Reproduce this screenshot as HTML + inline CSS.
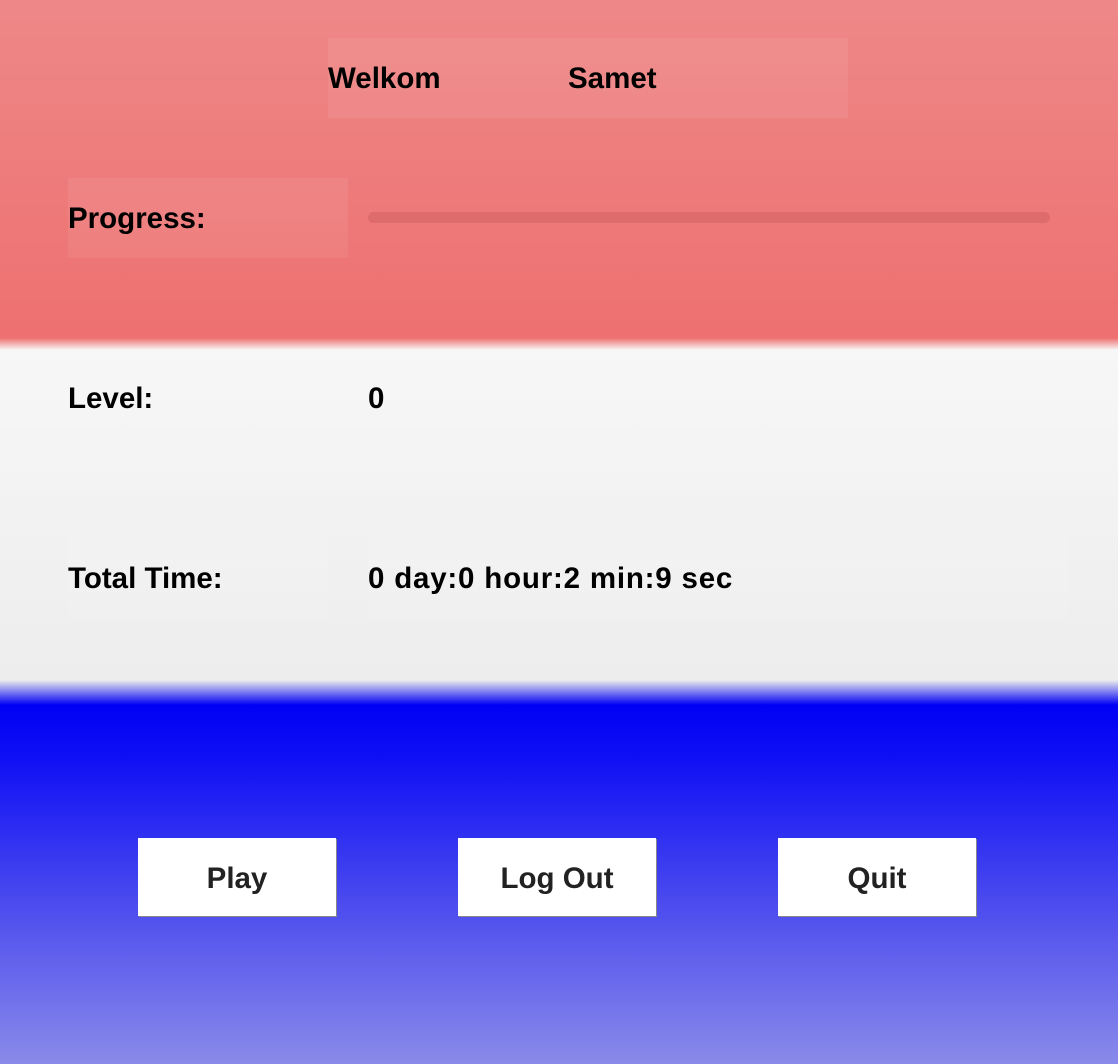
<!DOCTYPE html>
<html><head><meta charset="utf-8"><style>
html,body{margin:0;padding:0;}
body{width:1118px;height:1064px;position:relative;overflow:hidden;font-family:"Liberation Sans",sans-serif;font-weight:bold;
background:linear-gradient(to bottom,#ee8888 0px,#ee7070 338px,#f7f7f7 350px,#ededed 680px,#0000f5 705px,#1010f5 760px,#4a4aef 900px,#8a8aea 1064px);}
.box{position:absolute;height:80px;line-height:82px;font-size:29.5px;color:#000;box-sizing:border-box;white-space:nowrap;}
.hl{background:rgba(255,255,255,0.07);}
.bar{position:absolute;left:368px;top:212px;width:682px;height:11px;border-radius:6px;background:rgba(160,60,60,0.2);}
.btn{position:absolute;top:838px;width:198px;height:78px;background:#fff;box-shadow:1px 1px 0 #888;text-align:center;line-height:82px;font-size:29.5px;color:#222;}
</style></head><body>
<div class="box hl" style="left:328px;top:38px;width:240px;">Welkom</div>
<div class="box hl" style="left:568px;top:38px;width:280px;">Samet</div>
<div class="box hl" style="left:68px;top:178px;width:280px;">Progress:</div>
<div class="bar"></div>
<div class="box" style="left:68px;top:358px;width:280px;">Level:</div>
<div class="box" style="left:368px;top:358px;width:280px;">0</div>
<div class="box hl" style="left:68px;top:538px;width:260px;">Total Time:</div>
<div class="box hl" style="left:368px;top:538px;width:700px;letter-spacing:0.8px;">0 day:0 hour:2 min:9 sec</div>
<div class="btn" style="left:138px;">Play</div>
<div class="btn" style="left:458px;">Log Out</div>
<div class="btn" style="left:778px;">Quit</div>
</body></html>
